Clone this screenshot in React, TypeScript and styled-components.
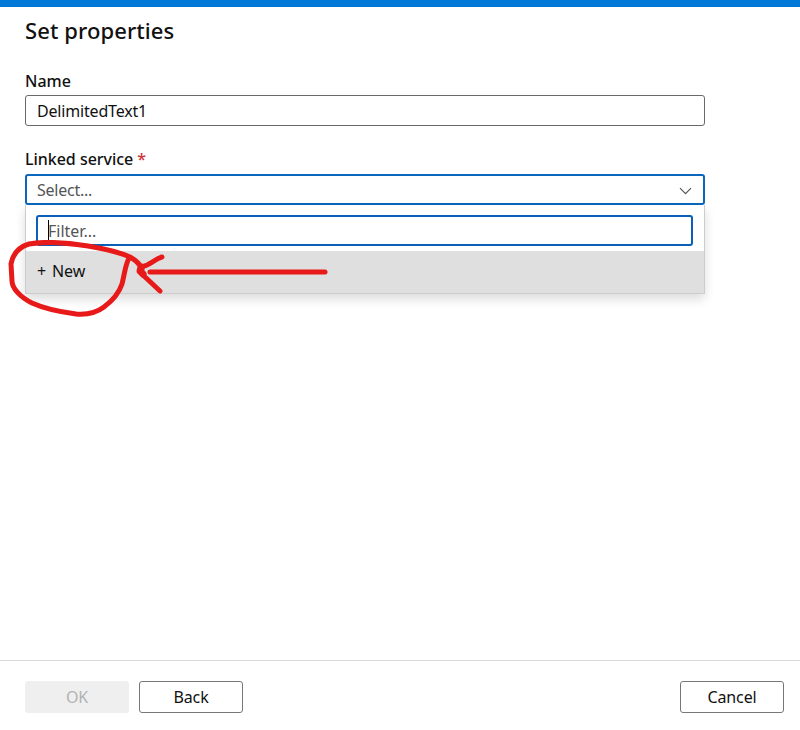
import React from "react";
import styled, { createGlobalStyle } from "styled-components";

const GlobalStyle = createGlobalStyle`
  *, *::before, *::after { box-sizing: border-box; }
  body {
    margin: 0;
    background: #fff;
    color: #111;
    font-family: "Segoe UI", "Noto Sans", "Open Sans", sans-serif;
    font-size: 16px;
    overflow: hidden;
  }
`;

const Panel = styled.main`
  position: relative;
  display: flex;
  flex-direction: column;
  width: 800px;
  height: 730px;
  border-top: 7px solid #0078d7;
  background: #fff;
`;

const Content = styled.section`
  flex: 1;
  padding: 7px 95px 0 25px;
`;

const Title = styled.h1`
  margin: 0;
  height: 32px;
  line-height: 32px;
  font-size: 22px;
  font-weight: 500;
  letter-spacing: 0.09px;
`;

const Field = styled.div<{ $gap: number }>`
  display: flex;
  flex-direction: column;
  margin-top: ${(p) => p.$gap}px;
`;

const Label = styled.label`
  height: 24px;
  line-height: 24px;
  font-size: 16px;
  font-weight: 500;
  letter-spacing: -0.03px;
`;

const Required = styled.span`
  color: #d13438;
`;

const TextBox = styled.div`
  display: flex;
  align-items: center;
  height: 31px;
  margin-top: 2px;
  padding: 0 11px;
  border: 1px solid #6b6967;
  border-radius: 3px;
  letter-spacing: -0.18px;
`;

const Select = styled.div`
  display: flex;
  align-items: center;
  justify-content: space-between;
  height: 31px;
  margin-top: 3px;
  padding: 1px 11px 0 10px;
  border: 2px solid #0a67bd;
  border-radius: 3px;
  color: #555;
  letter-spacing: -0.25px;
`;

const Chevron = styled.svg`
  margin-top: 2px;
  fill: none;
  stroke: #555;
  stroke-width: 1.2;
`;

const Menu = styled.div`
  height: 89px;
  border: 1px solid #ccc;
  border-top: 0;
  padding-top: 10px;
  background: #fff;
  box-shadow: 0 5px 10px rgba(0, 0, 0, 0.14);
`;

const Filter = styled.div`
  display: flex;
  align-items: center;
  height: 31px;
  margin: 0 11px 5px 10px;
  padding: 1px 10px 0;
  border: 2px solid #0a5fb8;
  border-radius: 3px;
  color: #555;
  letter-spacing: 0;
`;

const Caret = styled.span`
  width: 1px;
  height: 22px;
  margin-right: -1px;
  background: #000;
`;

const Option = styled.div`
  height: 42px;
  padding-left: 11px;
  line-height: 40px;
  word-spacing: 1.6px;
  background: #dfdfdf;
`;

const Footer = styled.footer`
  display: flex;
  gap: 10px;
  height: 70px;
  padding: 20px 16px 0 25px;
  border-top: 1px solid #d8d8d8;
`;

const Button = styled.button<{ $end?: boolean }>`
  width: 104px;
  height: 32px;
  padding: 0;
  margin-left: ${(p) => (p.$end ? "auto" : "0")};
  border: 1px solid #777;
  border-radius: 3px;
  background: #fff;
  color: #111;
  font: inherit;
  letter-spacing: -0.1px;

  &:disabled {
    border-color: #efefef;
    background: #efefef;
    color: #b3b3b3;
  }
`;

const Ink = styled.svg`
  position: absolute;
  left: 0;
  top: 233px;
  fill: none;
  stroke: #e81919;
  stroke-width: 5;
  stroke-linecap: round;
  stroke-linejoin: round;
  pointer-events: none;
`;

export default function App() {
  return (
    <>
      <GlobalStyle />
      <Panel>
        <Content>
          <Title>Set properties</Title>
          <Field $gap={23}>
            <Label>Name</Label>
            <TextBox>DelimitedText1</TextBox>
          </Field>
          <Field $gap={21}>
            <Label>
              Linked service <Required>*</Required>
            </Label>
            <Select>
              Select...
              <Chevron width="13" height="8" viewBox="0 0 13 8">
                <path d="M1 1.2 6.5 6.7 12 1.2" />
              </Chevron>
            </Select>
            <Menu>
              <Filter>
                <Caret />
                Filter...
              </Filter>
              <Option>+ New</Option>
            </Menu>
          </Field>
        </Content>
        <Footer>
          <Button disabled>OK</Button>
          <Button>Back</Button>
          <Button $end>Cancel</Button>
        </Footer>
        <Ink width="340" height="90" viewBox="0 240 340 90">
          <path d="M129 258C125 266 125 272 122 284C119 293 112 301 104 307C96 313 88 315 76 314C61 312 45 309 32 303C20 297 12 288 12 281L11 264C13 253 19 247 29 244C45 241 69 243 88 246C106 249 121 253 130 257C137 261 140 264 142 269" />
          <path d="M162 257C154 259 152 265 141 267C139 270 141 273 144 276L160 291M150 272H325" />
          <path d="M141 267L140 271L143 274" strokeWidth="7" />
        </Ink>
      </Panel>
    </>
  );
}
